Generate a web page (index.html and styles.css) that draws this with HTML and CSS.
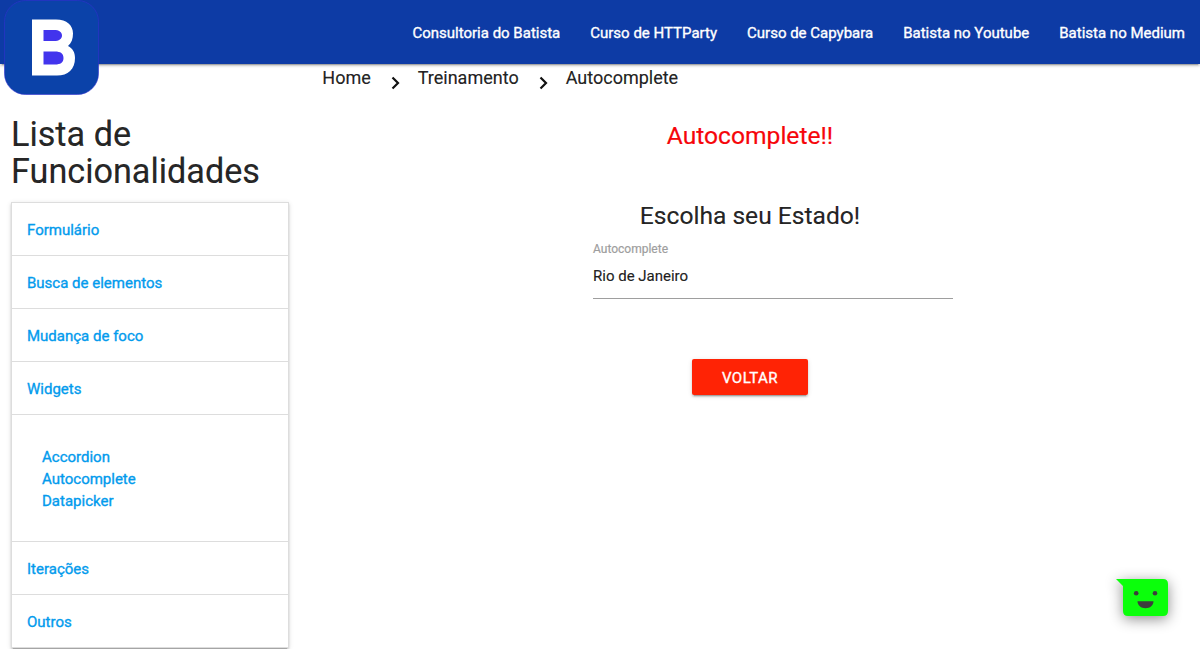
FILE: index.html
```html
<!DOCTYPE html>
<html lang="pt-BR">
<head>
<meta charset="utf-8">
<title>Autocomplete</title>
<link rel="stylesheet" href="styles.css">
</head>
<body>
<nav class="navbar">
  <a class="brand" href="#" aria-label="Batista">
    <svg width="95" height="95" viewBox="0 0 95 95">
      <rect x=".5" y=".5" width="94" height="94" rx="21" fill="#0b42a9" stroke="#312fd0" stroke-width=".6"/>
      <path d="M28 19.500H52C63 19.500 69 25.500 69 33.500C69 39 67.500 43 64 46C69 48.500 71 52.500 71 58C71 69.500 64 75.500 53 75.500H28Z" fill="#fff"/>
      <path d="M39.500 30H50C55 30 58 32 58 35.500S55 41 50 41H39.500ZM39.500 51.500H51C56.500 51.500 59.500 53.500 59.500 58S56.500 64.500 51 64.500H39.500Z" fill="#4234ed"/>
    </svg>
  </a>
  <ul class="nav-links">
    <li><a href="#">Consultoria do Batista</a></li>
    <li><a href="#">Curso de HTTParty</a></li>
    <li><a href="#">Curso de Capybara</a></li>
    <li><a href="#">Batista no Youtube</a></li>
    <li><a href="#">Batista no Medium</a></li>
  </ul>
</nav>
<div class="page">
  <aside class="sidebar">
    <h4 class="sidebar-title">Lista de Funcionalidades</h4>
    <ul class="menu">
      <li class="menu-item"><a href="#">Formulário</a></li>
      <li class="menu-item"><a href="#">Busca de elementos</a></li>
      <li class="menu-item"><a href="#">Mudança de foco</a></li>
      <li class="menu-item"><a href="#">Widgets</a></li>
      <li class="submenu">
        <a href="#">Accordion</a>
        <a href="#">Autocomplete</a>
        <a href="#">Datapicker</a>
      </li>
      <li class="menu-item"><a href="#">Iterações</a></li>
      <li class="menu-item"><a href="#">Outros</a></li>
    </ul>
  </aside>
  <main class="content">
    <div class="breadcrumbs">
      <a href="#">Home</a>
      <svg class="chevron" width="9" height="14" viewBox="0 0 9 14"><path d="M1.500 1.500L7 7L1.500 12.500"/></svg>
      <a href="#">Treinamento</a>
      <svg class="chevron" width="9" height="14" viewBox="0 0 9 14"><path d="M1.500 1.500L7 7L1.500 12.500"/></svg>
      <a href="#">Autocomplete</a>
    </div>
    <h5 class="title title-red">Autocomplete!!</h5>
    <h5 class="title">Escolha seu Estado!</h5>
    <div class="field">
      <label class="field-label" for="estado">Autocomplete</label>
      <input class="field-input" id="estado" type="text" value="Rio de Janeiro">
    </div>
    <a class="button" href="#">VOLTAR</a>
  </main>
</div>
<div class="chat">
  <svg width="53" height="38" viewBox="0 0 53 38">
    <path d="M0 0H47Q52 0 52 5V32Q52 37 47 37H12Q7 37 7 32V7Z" fill="#0bff0b"/>
    <circle cx="20.200" cy="14.200" r="2.300" fill="#3d3d3d"/>
    <circle cx="39" cy="14.200" r="2.300" fill="#3d3d3d"/>
    <path d="M21.500 22.300H37.500C37.500 26.500 34 29.300 29.500 29.300S21.500 26.500 21.500 22.300Z" fill="#3d3d3d"/>
  </svg>
</div>
</body>
</html>
```
FILE: styles.css
```css
* { box-sizing: border-box; }
body {
  margin: 0;
  height: 649px;
  overflow: hidden;
  background: #fff;
  color: rgba(0, 0, 0, .87);
  font: 400 15px/22px Roboto, sans-serif;
  -webkit-text-stroke: .2px;
}
a { color: inherit; text-decoration: none; }
ul { margin: 0; padding: 0; list-style: none; }
h4, h5 { margin: 0; font-weight: 400; }

.navbar {
  position: relative;
  z-index: 1;
  display: flex;
  justify-content: space-between;
  height: 64px;
  padding-left: 4px;
  background: #0d3ba5;
  box-shadow: 0 2px 2px 0 rgba(0,0,0,.14), 0 1px 5px 0 rgba(0,0,0,.12), 0 3px 1px -2px rgba(0,0,0,.2);
}
.brand { height: 95px; }
.brand svg { display: block; }
.nav-links { display: flex; color: #fff; line-height: 66px; -webkit-text-stroke: .35px; }
.nav-links a { display: block; padding: 0 15px; }

.page { display: flex; height: 585px; }
.sidebar { width: 300px; padding: 52px 11px 0 11px; }
.sidebar-title { font-size: 34.2px; line-height: 37px; margin-bottom: 12px; }
.menu {
  border: 1px solid #ddd;
  border-bottom: 0;
  box-shadow: 0 2px 2px 0 rgba(0,0,0,.14), 0 1px 5px 0 rgba(0,0,0,.12), 0 3px 1px -2px rgba(0,0,0,.2);
  color: #039bed;
  -webkit-text-stroke: .35px;
}
.menu li { border-bottom: 1px solid #ddd; }
.menu-item { height: 53px; padding: 16px 15px 0; }
.submenu { display: flex; flex-direction: column; height: 127px; padding: 31px 30px 0; }

.content { flex: 1; display: flex; flex-direction: column; align-items: center; }
.breadcrumbs { align-self: stretch; display: flex; padding-left: 22.3px; height: 42px; font-size: 18px; line-height: 28px; }
.chevron { margin: 11.500px 17.500px 0 20.500px; fill: none; stroke: #111; stroke-width: 2.2; }
.title { font-size: 24.6px; line-height: 27px; margin: 16px 0 53px; }
.title-red { color: #f6050a; margin: 16px 0 37px; }
.title + .field { margin-top: -40px; }
.field { width: 360px; margin-left: 46px; display: flex; flex-direction: column; }
.field-label { font-size: 12px; line-height: 14px; color: #9e9e9e; }
.field-input {
  height: 43px;
  padding: 0 0 2px;
  border: 0;
  border-bottom: 1px solid #9e9e9e;
  outline: 0;
  background: transparent;
  color: rgba(0, 0, 0, .87);
  font: inherit;
  -webkit-text-stroke: inherit;
}
.button {
  width: 116px;
  height: 36px;
  margin-top: 60px;
  border-radius: 2px;
  background: #ff2305;
  color: #fff;
  line-height: 38px;
  letter-spacing: .5px;
  -webkit-text-stroke: .35px;
  text-align: center;
  box-shadow: 0 2px 2px 0 rgba(0,0,0,.14), 0 1px 5px 0 rgba(0,0,0,.12), 0 3px 1px -2px rgba(0,0,0,.2);
}
.chat { position: fixed; left: 1116px; top: 579px; filter: drop-shadow(0 3px 7px rgba(0,0,0,.45)); }
.chat svg { display: block; overflow: visible; }
```
